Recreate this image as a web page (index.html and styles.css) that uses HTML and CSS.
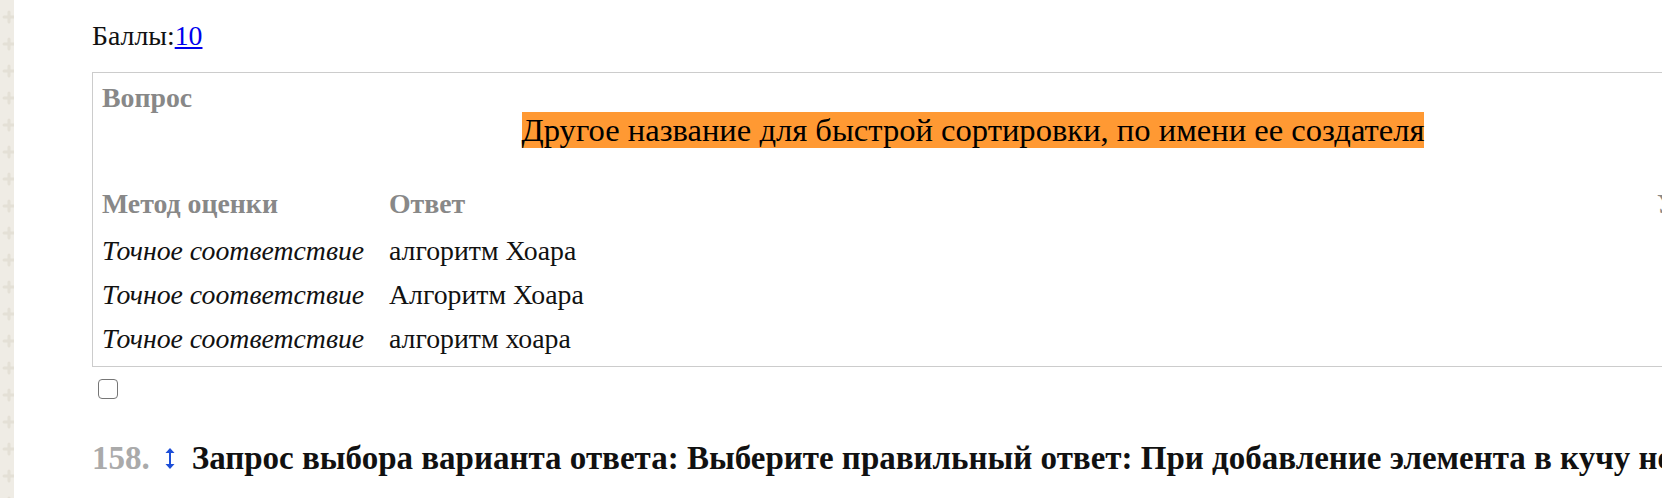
FILE: index.html
```html
<!DOCTYPE html>
<html lang="ru">
<head>
<meta charset="utf-8">
<title>Вопрос</title>
<link rel="stylesheet" href="styles.css">
</head>
<body>
<div class="page">
  <aside class="strip">
    <svg class="strip-svg" width="14" height="498" aria-hidden="true">
      <defs>
        <pattern id="plus" width="14" height="27" patternUnits="userSpaceOnUse" y="3">
          <path d="M9 9 V19 M4 14 H14" stroke="#e4e0d6" stroke-width="3" stroke-linecap="round"/>
        </pattern>
      </defs>
      <rect width="14" height="498" fill="#efece5"/>
      <rect width="14" height="498" fill="url(#plus)"/>
    </svg>
  </aside>
  <main class="content">
    <div class="score">Баллы:<a href="#" class="score-link">10</a></div>
    <table class="qtable">
      <colgroup>
        <col class="c1"><col class="c2"><col class="c3">
      </colgroup>
      <tr>
        <th colspan="3" class="q-label">Вопрос</th>
      </tr>
      <tr>
        <td colspan="3" class="q-text"><span class="hl">Другое название для быстрой сортировки, по имени ее создателя</span></td>
      </tr>
      <tr class="head">
        <th>Метод оценки</th>
        <th>Ответ</th>
        <th>Удалить</th>
      </tr>
      <tr class="row">
        <td class="method">Точное соответствие</td>
        <td>алгоритм Хоара</td>
        <td></td>
      </tr>
      <tr class="row">
        <td class="method">Точное соответствие</td>
        <td>Алгоритм Хоара</td>
        <td></td>
      </tr>
      <tr class="row last">
        <td class="method">Точное соответствие</td>
        <td>алгоритм хоара</td>
        <td></td>
      </tr>
    </table>
    <div class="check"><input type="checkbox" class="cb"></div>
    <h3 class="qhead">
      <span class="num">158.</span>
      <svg class="move" width="10" height="23" viewBox="0 0 10 23" aria-hidden="true">
        <path d="M5 3 V20" stroke="#1d4ed8" stroke-width="2"/>
        <path d="M0.5 6 L5 1 L9.5 6 Z" fill="#1d4ed8"/>
        <path d="M0.5 17 L5 22 L9.5 17 Z" fill="#1d4ed8"/>
      </svg>
      <span class="title">Запрос выбора варианта ответа: Выберите правильный ответ: При добавление элемента в кучу необходимо восстановить её свойства</span>
    </h3>
  </main>
</div>
</body>
</html>
```

FILE: styles.css
```css
html, body {
  margin: 0;
  padding: 0;
  background: #fff;
}
body {
  overflow: hidden;
  font-family: "Liberation Serif", "Times New Roman", serif;
  font-size: 27.8px;
  color: #111;
}
.page {
  display: flex;
  align-items: flex-start;
  min-height: 498px;
}
.strip {
  flex: 0 0 14px;
  width: 14px;
  height: 498px;
}
.strip-svg {
  display: block;
}
.content {
  flex: 0 0 auto;
  padding: 20px 0 0 78px;
}
.score {
  line-height: 31px;
  margin-bottom: 21px;
}
.score-link {
  color: #0000ee;
  text-decoration: underline;
}
.qtable {
  border: 1px solid #cccccc;
  border-collapse: separate;
  border-spacing: 0;
  table-layout: fixed;
  width: 1762px;
}
.c1 { width: 287px; }
.c2 { width: 1268px; }
.c3 { width: 205px; }
.qtable th,
.qtable td {
  padding: 6px 9px 7px;
  line-height: 31px;
  text-align: left;
  vertical-align: top;
  white-space: nowrap;
}
.qtable th {
  color: #888888;
  font-weight: bold;
}
.qtable .q-label {
  padding: 10px 9px 0;
  line-height: 29px;
}
.qtable .q-text {
  text-align: center;
  padding: 0 9px 34px;
  font-size: 32.6px;
  line-height: 36px;
}
.hl {
  background: #ff9933;
  color: #000;
}
.head th {
  padding: 6px 9px 10px;
}
.method {
  font-style: italic;
}
.row.last td {
  padding-bottom: 12px;
}
.check {
  padding: 12px 0 0 6px;
  height: 20px;
}
.cb {
  appearance: none;
  -webkit-appearance: none;
  display: block;
  margin: 0;
  width: 20px;
  height: 20px;
  box-sizing: border-box;
  border: 1.5px solid #767676;
  border-radius: 4px;
  background: #fff;
}
.qhead {
  display: flex;
  align-items: center;
  margin: 41px 0 0;
  font-size: 33px;
  font-weight: bold;
  line-height: 37px;
  white-space: nowrap;
  color: #111;
}
.num {
  color: #aaaaaa;
}
.move {
  flex: 0 0 auto;
  margin: 0 17px 0 15px;
}
.title {
  flex: 0 0 auto;
}
```
